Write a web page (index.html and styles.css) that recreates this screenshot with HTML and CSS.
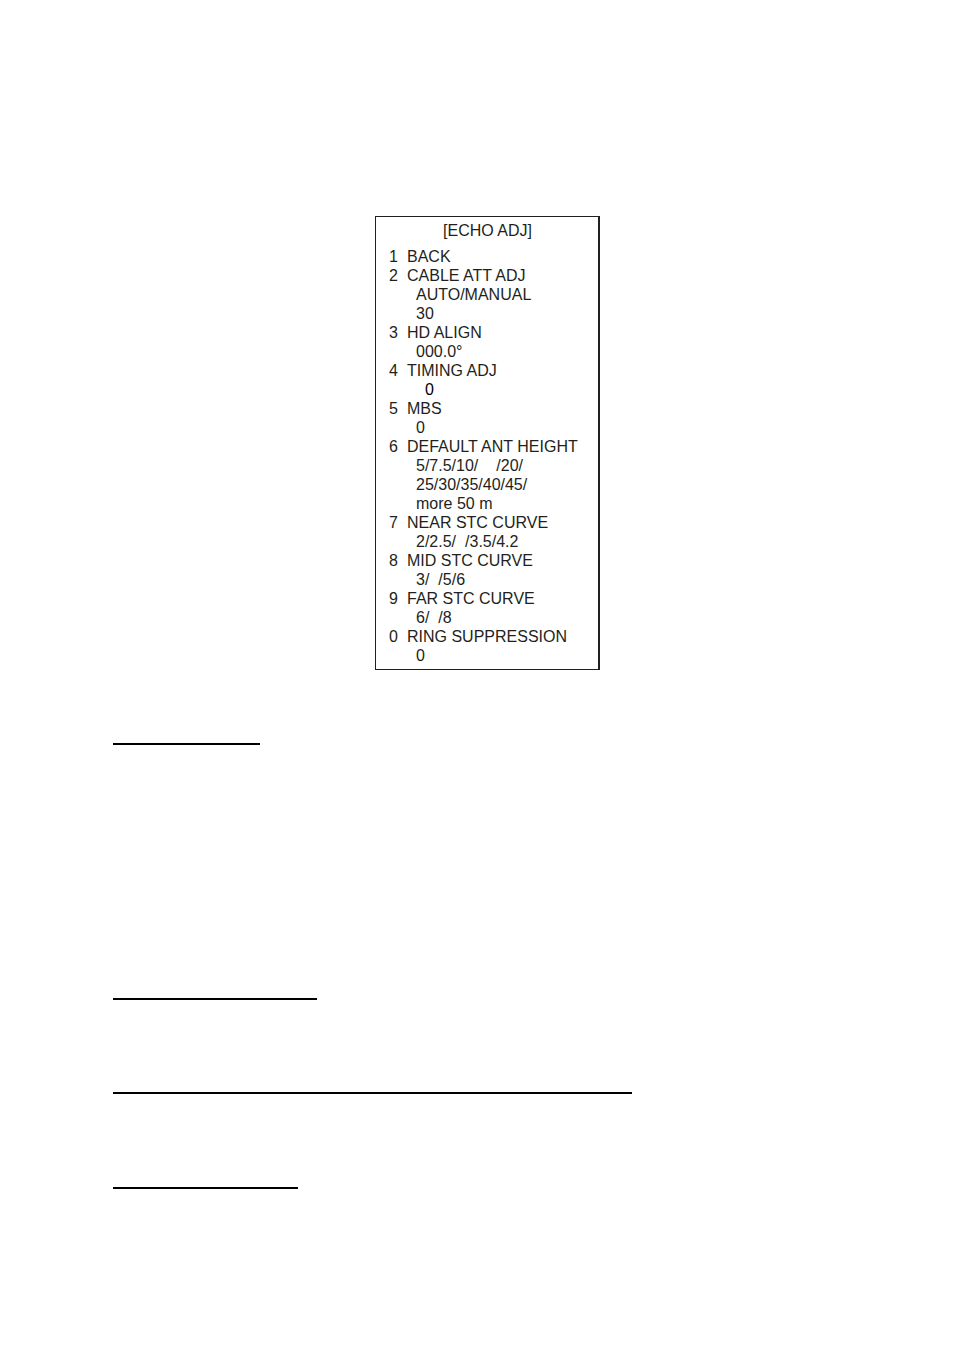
FILE: index.html
```html
<!DOCTYPE html>
<html lang="en">
<head>
<meta charset="utf-8">
<title>Echo adjustment menu</title>
<link rel="stylesheet" href="styles.css">
</head>
<body>
<main class="page">
  <section class="menu">
    <h1 class="title">[ECHO ADJ]</h1>
    <dl class="items">
      <dt><span class="key">1</span>BACK</dt>
      <dt><span class="key">2</span>CABLE ATT ADJ</dt>
      <dd>AUTO/MANUAL</dd>
      <dd>30</dd>
      <dt><span class="key">3</span>HD ALIGN</dt>
      <dd>000.0°</dd>
      <dt><span class="key">4</span>TIMING ADJ</dt>
      <dd class="indented">0</dd>
      <dt><span class="key">5</span>MBS</dt>
      <dd>0</dd>
      <dt><span class="key">6</span>DEFAULT ANT HEIGHT</dt>
      <dd>5/7.5/10/<span class="blank wide"></span>/20/</dd>
      <dd>25/30/35/40/45/</dd>
      <dd>more 50 m</dd>
      <dt><span class="key">7</span>NEAR STC CURVE</dt>
      <dd>2/2.5/<span class="blank"></span>/3.5/4.2</dd>
      <dt><span class="key">8</span>MID STC CURVE</dt>
      <dd>3/<span class="blank"></span>/5/6</dd>
      <dt><span class="key">9</span>FAR STC CURVE</dt>
      <dd>6/<span class="blank"></span>/8</dd>
      <dt><span class="key">0</span>RING SUPPRESSION</dt>
      <dd>0</dd>
    </dl>
  </section>
  <hr class="rule rule-a">
  <hr class="rule rule-b">
  <hr class="rule rule-c">
  <hr class="rule rule-d">
</main>
</body>
</html>
```
FILE: styles.css
```css
body {
  margin: 0;
  background: #fff;
  color: #231f20;
  font: 16px/19px "Liberation Sans", Arial, sans-serif;
}
.page {
  padding: 216px 113px 160px;
}
.menu {
  box-sizing: border-box;
  width: 225px;
  margin-left: 262px;
  padding: 4px 12px 4px 13px;
  border: 1px solid #231f20;
  border-right-width: 2px;
}
.title {
  margin: 0 0 7px;
  font-size: 16px;
  font-weight: 400;
  text-align: center;
}
.items {
  margin: 0;
  white-space: nowrap;
}
.key {
  display: inline-block;
  width: 18px;
}
dd {
  margin: 0 0 0 27px;
}
.indented {
  margin-left: 36px;
  color: #000;
}
.blank {
  display: inline-block;
  width: 9px;
}
.wide {
  width: 18px;
}
.rule {
  height: 2px;
  margin: 0;
  border: 0;
  background: #000;
}
.rule-a {
  width: 147px;
  margin-top: 73px;
}
.rule-b {
  width: 204px;
  margin-top: 253px;
}
.rule-c {
  width: 519px;
  margin-top: 92px;
}
.rule-d {
  width: 185px;
  margin-top: 93px;
}
```
